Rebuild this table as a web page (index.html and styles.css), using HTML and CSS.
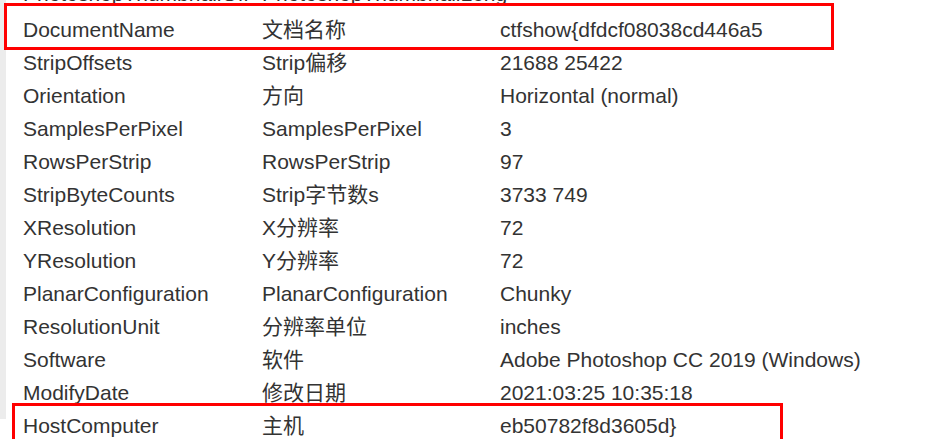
FILE: index.html
```html
<!DOCTYPE html>
<html lang="zh-CN">
<head>
    <meta charset="UTF-8">
    <title>EXIF 信息</title>
    <meta name="viewport" content="width=device-width, initial-scale=1.0">
    <link rel="stylesheet" href="styles.css">
</head>
<body>
    <div class="page">
        <div class="meta-list">
            <div class="meta-row cut">
                <span>PhotoshopThumbnailOff</span>
                <span>PhotoshopThumbnailLeng</span>
                <span></span>
            </div>
            <div class="meta-row"><span>DocumentName</span><span>文档名称</span><span>ctfshow{dfdcf08038cd446a5</span></div>
            <div class="meta-row"><span>StripOffsets</span><span>Strip偏移</span><span>21688 25422</span></div>
            <div class="meta-row"><span>Orientation</span><span>方向</span><span>Horizontal (normal)</span></div>
            <div class="meta-row"><span>SamplesPerPixel</span><span>SamplesPerPixel</span><span>3</span></div>
            <div class="meta-row"><span>RowsPerStrip</span><span>RowsPerStrip</span><span>97</span></div>
            <div class="meta-row"><span>StripByteCounts</span><span>Strip字节数s</span><span>3733 749</span></div>
            <div class="meta-row"><span>XResolution</span><span>X分辨率</span><span>72</span></div>
            <div class="meta-row"><span>YResolution</span><span>Y分辨率</span><span>72</span></div>
            <div class="meta-row"><span>PlanarConfiguration</span><span>PlanarConfiguration</span><span>Chunky</span></div>
            <div class="meta-row"><span>ResolutionUnit</span><span>分辨率单位</span><span>inches</span></div>
            <div class="meta-row"><span>Software</span><span>软件</span><span>Adobe Photoshop CC 2019 (Windows)</span></div>
            <div class="meta-row"><span>ModifyDate</span><span>修改日期</span><span>2021:03:25 10:35:18</span></div>
            <div class="meta-row"><span>HostComputer</span><span>主机</span><span>eb50782f8d3605d}</span></div>
        </div>
    </div>

    <!-- caixas vermelhas por cima da tabela -->
    <div class="mark mark-top"></div>
    <div class="mark mark-bottom"></div>
</body>
</html>
```

FILE: styles.css
```css
html, body {
    margin: 0;
    height: 100%;
    overflow: hidden;
}
body {
    position: relative;
    background-color: #fff;
    font-family: "Liberation Sans", "Noto Sans CJK SC", sans-serif;
    font-size: 21px;
    color: #333;
}
.page {
    border-left: 6px solid #ececec;
    height: 100%;
}
.meta-list {
    margin-top: -20px;
}
.meta-row {
    display: grid;
    grid-template-columns: 239px 238px 1fr;
    height: 33px;
    line-height: 33px;
    padding-left: 17px;
    white-space: nowrap;
}
/* linha anterior, quase toda fora da tela */
.meta-row.cut {
    line-height: 28px;
}
/* caixas de destaque */
.mark {
    position: absolute;
    box-sizing: border-box;
    border: 3px solid #ff0000;
}
.mark-top {
    left: 4px;
    top: 3px;
    width: 830px;
    height: 47px;
}
.mark-bottom {
    left: 12px;
    top: 403px;
    width: 771px;
    height: 60px;
}
```
